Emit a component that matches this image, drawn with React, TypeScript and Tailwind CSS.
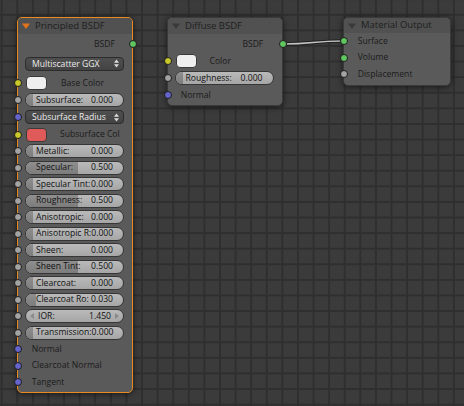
type Sock = 'color' | 'value' | 'vector' | 'shader';

const sockBg: Record<Sock, string> = {
  color: 'bg-[#c9c92c]',
  value: 'bg-[#a3a3a3]',
  vector: 'bg-[#6464cc]',
  shader: 'bg-[#60c760]',
};

function Socket({ kind, out = false }: { kind: Sock; out?: boolean }) {
  return (
    <span
      className={`absolute top-1/2 size-[8px] -translate-y-1/2 rounded-full border border-[#1c1c1c] ${sockBg[kind]} ${
        out ? 'right-[-4.5px]' : 'left-[-4.5px]'
      }`}
    />
  );
}

function Caret({ color }: { color: string }) {
  return (
    <svg width="8" height="6" viewBox="0 0 8 6" className="shrink-0">
      <path d="M0 0.5 L8 0.5 L4 6 Z" fill={color} />
    </svg>
  );
}

function Header({ title, selected = false, h = 'h-[16px]' }: { title: string; selected?: boolean; h?: string }) {
  return (
    <div className={`flex ${h} items-center gap-[5px] rounded-t-[4px] bg-[#515151] pl-[4px] text-[9.5px] text-[#1e1e1e]`}>
      <Caret color={selected ? '#e0731c' : '#3a3a3a'} />
      <span className="whitespace-nowrap">{title}</span>
    </div>
  );
}

function Swatch({ color }: { color: string }) {
  return <span className={`ml-[1px] h-[14px] w-[21px] shrink-0 rounded-[4px] border border-[#3a3a3a] ${color}`} />;
}

function UpDown() {
  return (
    <svg width="5" height="9" viewBox="0 0 5 9" className="shrink-0">
      <path d="M0 3.8 L2.5 0.5 L5 3.8 Z M0 5.2 L2.5 8.5 L5 5.2 Z" fill="#dcdcdc" />
    </svg>
  );
}

function Dropdown({ label }: { label: string }) {
  return (
    <div className="flex h-[14px] flex-1 items-center justify-between rounded-[4px] border border-[#2c2c2c] bg-linear-to-b from-[#4f4f4f] to-[#434343] pl-[6px] pr-[4px] text-[#ececec]">
      <span className="whitespace-nowrap">{label}</span>
      <UpDown />
    </div>
  );
}

function Slider({ label, value, fill }: { label: string; value: string; fill?: number }) {
  return (
    <div className="relative h-[14px] flex-1 overflow-hidden rounded-full border border-[#363636] bg-linear-to-b from-[#bababa] to-[#a6a6a6]">
      {fill !== undefined && (
        <div
          className="absolute inset-y-0 left-0 bg-linear-to-b from-[#8f8f8f] to-[#7c7c7c]"
          style={{ width: `calc(7px + ${fill} * (100% - 7px))` }}
        />
      )}
      {fill === undefined && (
        <>
          <svg width="4" height="6" viewBox="0 0 4 6" className="absolute left-[4px] top-[3px]">
            <path d="M4 0 L0 3 L4 6 Z" fill="#8a8a8a" />
          </svg>
          <svg width="4" height="6" viewBox="0 0 4 6" className="absolute right-[4px] top-[3px]">
            <path d="M0 0 L4 3 L0 6 Z" fill="#8a8a8a" />
          </svg>
        </>
      )}
      <div
        className={`relative flex h-full items-center justify-between whitespace-nowrap text-[#111] ${
          fill === undefined ? 'px-[12px]' : 'px-[10px]'
        }`}
      >
        <span>{label}</span>
        <span>{value}</span>
      </div>
    </div>
  );
}

const sliders: { label: string; value: string; fill?: number }[] = [
  { label: 'Metallic:', value: '0.000', fill: 0 },
  { label: 'Specular:', value: '0.500', fill: 0.5 },
  { label: 'Specular Tint:', value: '0.000', fill: 0 },
  { label: 'Roughness:', value: '0.500', fill: 0.5 },
  { label: 'Anisotropic:', value: '0.000', fill: 0 },
  { label: 'Anisotropic R:', value: '0.000', fill: 0 },
  { label: 'Sheen:', value: '0.000', fill: 0 },
  { label: 'Sheen Tint:', value: '0.500', fill: 0.5 },
  { label: 'Clearcoat:', value: '0.000', fill: 0 },
  { label: 'Clearcoat Ro:', value: '0.030', fill: 0.03 },
  { label: 'IOR:', value: '1.450' },
  { label: 'Transmission:', value: '0.000', fill: 0 },
];

const nodeBox =
  'absolute flex flex-col rounded-[5px] border bg-[#5a5a5a] text-[8.6px] shadow-[0_1px_6px_rgba(0,0,0,0.6)]';

function PrincipledNode() {
  const row = 'relative flex items-center pl-[7px] pr-[8px]';
  return (
    <div className={`${nodeBox} left-[17px] top-[17px] h-[376px] w-[116px] border-[#e88a22]`}>
      <Header title="Principled BSDF" selected />
      <div className="flex flex-col pt-[1.5px] text-[#1b1b1b]">
        <div className={`${row} h-[17px] justify-end !pr-[17px]`}>
          BSDF
          <Socket kind="shader" out />
        </div>
        <div className={`${row} mt-[3.2px] h-[16.6px]`}>
          <Dropdown label="Multiscatter GGX" />
        </div>
        <div className={`${row} mt-[2.4px] h-[17.1px]`}>
          <Socket kind="color" />
          <Swatch color="bg-[#efefef]" />
          <span className="ml-[14px] whitespace-nowrap">Base Color</span>
        </div>
        <div className={`${row} h-[17.1px]`}>
          <Socket kind="value" />
          <Slider label="Subsurface:" value="0.000" fill={0} />
        </div>
        <div className={`${row} h-[17.1px]`}>
          <Socket kind="vector" />
          <Dropdown label="Subsurface Radius" />
        </div>
        <div className={`${row} h-[17.1px]`}>
          <Socket kind="color" />
          <Swatch color="bg-[#e05a5a]" />
          <span className="ml-[13px] whitespace-nowrap">Subsurface Col</span>
        </div>
        {sliders.map((s) => (
          <div key={s.label} className={`${row} h-[16.5px]`}>
            <Socket kind="value" />
            <Slider {...s} />
          </div>
        ))}
        {['Normal', 'Clearcoat Normal', 'Tangent'].map((n) => (
          <div key={n} className={`${row} h-[16.5px] !pl-[13.7px]`}>
            <Socket kind="vector" />
            {n}
          </div>
        ))}
      </div>
    </div>
  );
}

function DiffuseNode() {
  const row = 'relative flex h-[17px] items-center pl-[6.5px] pr-[8.5px]';
  return (
    <div className={`${nodeBox} left-[167px] top-[17px] h-[89px] w-[116px] border-[#3a3a3a]`}>
      <Header title="Diffuse BSDF" />
      <div className="flex flex-col pt-[1.5px] text-[#1b1b1b]">
        <div className={`${row} justify-end !pr-[18.7px]`}>
          BSDF
          <Socket kind="shader" out />
        </div>
        <div className={row}>
          <Socket kind="color" />
          <Swatch color="bg-[#efefef]" />
          <span className="ml-[13px]">Color</span>
        </div>
        <div className={row}>
          <Socket kind="value" />
          <Slider label="Roughness:" value="0.000" fill={0} />
        </div>
        <div className={`${row} !pl-[12.7px]`}>
          <Socket kind="vector" />
          Normal
        </div>
      </div>
    </div>
  );
}

function OutputNode() {
  const inputs: [string, Sock][] = [
    ['Surface', 'shader'],
    ['Volume', 'shader'],
    ['Displacement', 'value'],
  ];
  return (
    <div className={`${nodeBox} left-[343px] top-[17px] h-[69px] w-[108px] border-[#3a3a3a]`}>
      <Header title="Material Output" h="h-[15px]" />
      <div className="flex flex-col text-[#1b1b1b]">
        {inputs.map(([name, kind]) => (
          <div key={name} className="relative flex h-[16.5px] items-center pl-[13.7px]">
            <Socket kind={kind} />
            {name}
          </div>
        ))}
      </div>
    </div>
  );
}

export default function App() {
  return (
    <div className="relative h-[406px] w-[464px] overflow-hidden bg-[#3b3b3b] bg-[image:linear-gradient(to_right,#2f2f2f_2px,transparent_2px),linear-gradient(to_bottom,#2f2f2f_2px,transparent_2px)] bg-size-[15.6px_15.6px] bg-position-[0.7px_-1.8px] font-['Open_Sans',sans-serif]">
      <svg width="464" height="406" className="pointer-events-none absolute inset-0">
        <path d="M283 44 C313 44, 313 41, 343 41" fill="none" stroke="#202020" strokeWidth="3.5" />
        <path d="M283 44 C313 44, 313 41, 343 41" fill="none" stroke="#c4c4c4" strokeWidth="1.6" />
      </svg>
      <PrincipledNode />
      <DiffuseNode />
      <OutputNode />
    </div>
  );
}
